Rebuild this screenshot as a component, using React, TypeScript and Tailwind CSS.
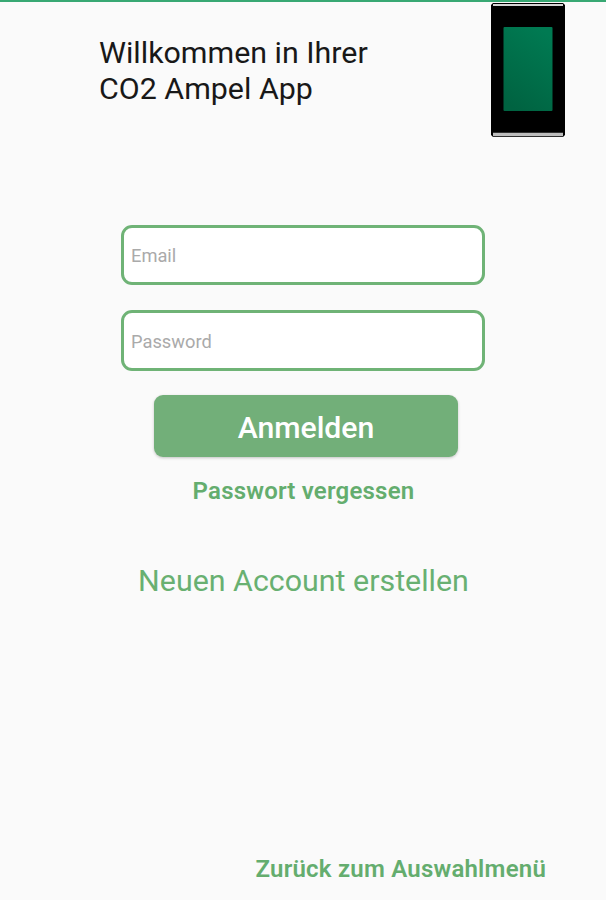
export default function App() {
  return (
    <main className="flex h-[900px] w-[606px] flex-col overflow-hidden border-t-2 border-[#38a873] bg-[#fafafa] font-['Roboto',sans-serif]">
      <header className="flex h-[136px] justify-between pr-10 pl-[99px]">
        <h1 className="pt-[33px] text-[30.4px] leading-[36px] font-normal text-[#181818]">Willkommen in Ihrer<br />CO2 Ampel App</h1>
        <svg width="76" height="136" viewBox="0 0 76 136">
          <defs><linearGradient id="screen" x1="0.7" y1="0" x2="0.3" y2="1"><stop stopColor="#007a52" /><stop offset="1" stopColor="#006341" /></linearGradient></defs>
          <path d="M3 1H73L75 3V133L73 135H3L1 133V3Z" />
          <path d="M3 3H73" stroke="#d5d5d5" strokeWidth="2" />
          <path d="M3 132.5H73" stroke="#bdbdbd" strokeWidth="3.5" />
          <rect x="13.5" y="25" width="49" height="84" rx="1" fill="url(#screen)" />
        </svg>
      </header>
      <form className="flex flex-col items-center pt-[86.5px]" onSubmit={(e) => e.preventDefault()}>
        <input aria-label="Email" placeholder="Email" className="h-[60.5px] w-[364px] rounded-[11px] border-[3px] border-[#6fb376] bg-white px-[7px] pt-0.5 text-[18.3px] outline-none placeholder:text-[#aaaaaa]" />
        <input aria-label="Password" type="password" placeholder="Password" className="mt-[25px] h-[60.5px] w-[364px] rounded-[11px] border-[3px] border-[#6fb376] bg-white px-[7px] pt-0.5 text-[18.3px] outline-none placeholder:text-[#aaaaaa]" />
        <button className="mt-[24.5px] ml-[6px] h-[62px] w-[304px] rounded-[9px] bg-[#72af79] pt-[3px] text-[30.2px] font-medium text-white shadow-[0_1px_3px_rgba(0,0,0,0.22)]">Anmelden</button>
        <button type="button" className="mt-4 ml-px h-9 text-[24px] font-semibold tracking-[0.2px] text-[#64ad6e]">Passwort vergessen</button>
        <button type="button" className="mt-[49px] ml-px h-11 text-[30.4px] text-[#68b071]">Neuen Account erstellen</button>
      </form>
      <footer className="mt-auto flex justify-end pr-[60px] pb-[13px]">
        <button className="h-9 text-[24px] font-semibold tracking-[0.22px] text-[#64ad6e]">Zurück zum Auswahlmenü</button>
      </footer>
    </main>
  );
}
